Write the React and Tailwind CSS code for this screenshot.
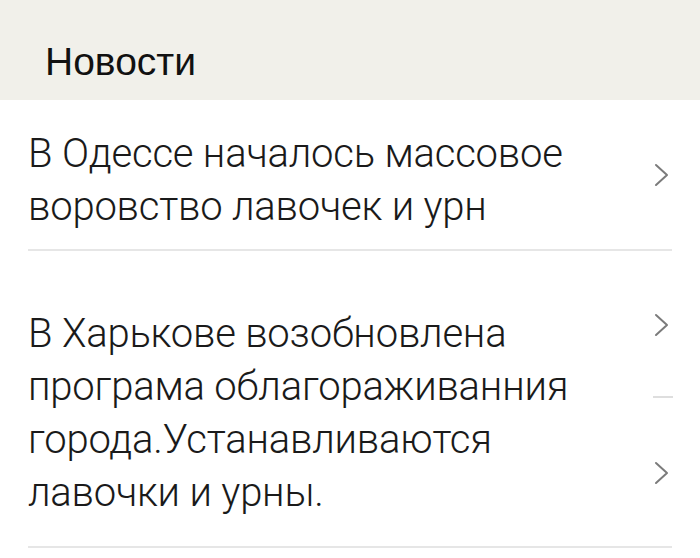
import React from "react";

function Chevron({ className = "" }) {
  return (
    <svg width="16" height="24" viewBox="0 0 16 24" className={className}>
      <polyline points="2,2 13,12 2,22" fill="none" stroke="#7b7b7b" strokeWidth="2" strokeLinecap="round" strokeLinejoin="round" />
    </svg>
  );
}

export default function App() {
  return (
    <div className="w-[700px] h-[558px] bg-white overflow-hidden relative">
      <div className="h-[100px] bg-[#f1f0ea] pl-[45px] pt-[43px]">
        <div className="text-[39px] leading-[38px] text-[#111]" style={{ fontFamily: '"Liberation Sans", Arial, sans-serif' }}>
          Новости
        </div>
      </div>
      <div className="px-[28px]" style={{ fontFamily: 'Roboto, "Noto Sans", sans-serif' }}>
        <div className="flex pt-[27px] pb-[16px]">
          <div className="flex-1 text-[40px] leading-[53px] font-light tracking-[-0.2px] text-[#1a1a1a]">
            В Одессе началось массовое<br />воровство лавочек и урн
          </div>
          <div className="w-[22px] flex items-center">
            <Chevron className="ml-[4px] mb-[10px]" />
          </div>
        </div>
        <div className="h-[2px] bg-[#e6e6e6]" />
        <div className="flex pt-[56px] pb-[27px]">
          <div className="flex-1 text-[40px] leading-[53px] font-light tracking-[-0.2px] text-[#1a1a1a]">
            В Харькове возобновлена<br />програма облагораживанния<br />города.Устанавливаются<br />лавочки и урны.
          </div>
          <div className="w-[22px] flex flex-col">
            <Chevron className="mt-[6px] ml-[4px]" />
            <div className="mt-[59px] h-[2px] w-[20px] ml-[3px] bg-[#dedede]" />
            <Chevron className="mt-[63px] ml-[4px]" />
          </div>
        </div>
        <div className="h-[2px] bg-[#e6e6e6]" />
      </div>
    </div>
  );
}
